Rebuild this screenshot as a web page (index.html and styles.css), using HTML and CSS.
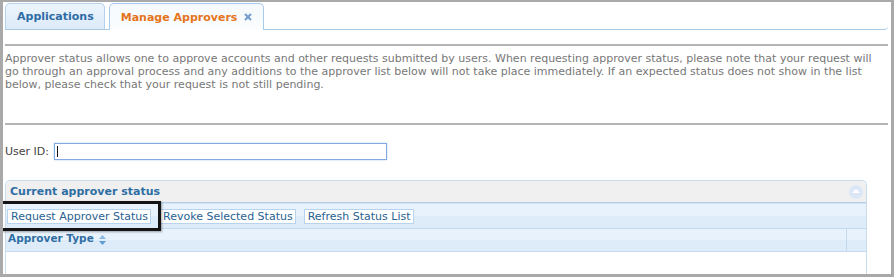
FILE: index.html
```html
<!DOCTYPE html>
<html lang="en">
<head>
  <meta charset="UTF-8" />
  <title>Manage Approvers</title>
  <link rel="stylesheet" href="styles.css">
</head>
<body>

  <div class="frame">
    <div class="tabs">
      <a class="tab">Applications</a>
      <a class="tab active">Manage Approvers
        <svg class="tab-close" width="8" height="8" viewBox="0 0 8 8"><path d="M1 1L7 7M7 1L1 7" stroke="#6e9dca" stroke-width="2"/></svg>
      </a>
    </div>

    <div class="tab-body">
      <hr class="rule">
      <p class="intro">Approver status allows one to approve accounts and other requests submitted by users. When requesting approver status, please note that your request will go through an approval process and any additions to the approver list below will not take place immediately. If an expected status does not show in the list below, please check that your request is not still pending.</p>
      <hr class="rule">

      <div class="user-row">
        <label for="userId">User ID:</label>
        <span class="input-wrap"><input type="text" id="userId" /></span>
      </div>

      <div class="panel">
        <div class="panel-head">
          <span>Current approver status</span>
          <span class="collapse"></span>
        </div>
        <div class="toolbar">
          <button>Request Approver Status</button>
          <button>Revoke Selected Status</button>
          <button>Refresh Status List</button>
        </div>
        <div class="grid-head">
          <div class="col">Approver Type
            <svg class="sort" width="7" height="10" viewBox="0 0 7 10"><path d="M3.5 0L7 4H0z" fill="#8cb8e2"/><path d="M0 6H7L3.5 10z" fill="#5f9bd4"/></svg>
          </div>
          <div class="col-end"></div>
        </div>
        <div class="grid-body"></div>
      </div>
    </div>

    <div class="callout"></div>
  </div>

</body>
</html>
```

FILE: styles.css
```css
* {
  margin: 0;
  padding: 0;
  box-sizing: border-box;
  font-family: 'DejaVu Sans', Verdana, sans-serif;
}

body {
  background-color: white;
  color: #333;
}

.frame {
  position: relative;
  width: 894px;
  height: 277px;
  border: 3px solid #a9a9a9;
  border-top-width: 2px;
  padding: 1px 3px 0 2px;
  overflow: hidden;
}

/* tabs */
.tabs {
  display: flex;
  gap: 4px;
  border-bottom: 1px solid #a9cae6;
  border-bottom-right-radius: 4px;
}

.tab {
  display: flex;
  align-items: center;
  height: 26px;
  padding: 0 10px 0 11px;
  border: 1px solid #b4d2ee;
  border-bottom: none;
  border-radius: 5px 5px 0 0;
  background: linear-gradient(#ecf5fd, #dceaf8);
  color: #2f6ca5;
  font-size: 11px;
  font-weight: bold;
  margin-bottom: -1px;
}

.tab.active {
  width: 155px;
  background: linear-gradient(#f5f9fd, #fbfdfe);
  border-color: #a7cbec;
  color: #e4751c;
  height: 27px;
}

.tab-close {
  margin-left: auto;
  margin-right: 1px;
}

/* body of the tab */
.rule {
  border: none;
  border-top: 2px solid #b5b5b5;
  margin-top: 14px;
}

.intro {
  font-size: 11px;
  line-height: 13px;
  color: #777;
  margin: 6px 0 32px;
  height: 39px;
}

.rule + .intro + .rule {
  margin-top: 0;
}

.user-row {
  display: flex;
  align-items: center;
  gap: 5px;
  margin-top: 18px;
  font-size: 11px;
  color: #444;
}

.input-wrap {
  position: relative;
}

.input-wrap::after {
  content: "";
  position: absolute;
  left: 3px;
  top: 3px;
  width: 1px;
  height: 11px;
  background: #111;
}

.user-row input {
  display: block;
  width: 333px;
  height: 17px;
  border: 1px solid #82aade;
  box-shadow: 0 0 2px #b8d2f2;
  font-size: 11px;
}

/* approver panel */
.panel {
  width: 862px;
  margin-top: 20px;
  border: 1px solid #c8dcee;
  border-bottom: none;
  border-radius: 5px 5px 0 0;
}

.panel-head {
  display: flex;
  align-items: center;
  justify-content: space-between;
  height: 22px;
  padding: 0 3px 0 4px;
  background-color: #f0f0f0;
  border-bottom: 1px solid #b3cfe8;
  border-radius: 5px 5px 0 0;
  color: #2f6ea3;
  font-size: 11px;
  font-weight: bold;
}

.collapse {
  position: relative;
  width: 14px;
  height: 14px;
  border-radius: 50%;
  background-color: #dbe7f6;
}

.collapse::after {
  content: "";
  position: absolute;
  left: 3px;
  top: 4px;
  border-left: 4px solid transparent;
  border-right: 4px solid transparent;
  border-bottom: 4px solid white;
}

.toolbar {
  display: flex;
  align-items: center;
  gap: 8px;
  height: 26px;
  padding-left: 1px;
  border-top: 1px solid #d2e3f3;
  border-bottom: 1px solid #c4d9ed;
  background: linear-gradient(#e8f2fc 50%, #deebf9 50%);
}

.toolbar button {
  height: 15px;
  padding: 0 2px 0 3px;
  border: 1px solid #b8d3ee;
  background-color: white;
  color: #2a5f92;
  font-size: 11px;
  line-height: 13px;
  cursor: pointer;
}

.grid-head {
  display: flex;
  height: 23px;
  border-bottom: 1px solid #c4d9ed;
  background: linear-gradient(#e8f2fc 50%, #deebf9 50%);
}

.col {
  flex: 1;
  display: flex;
  align-items: center;
  gap: 5px;
  padding-left: 2px;
  padding-bottom: 4px;
  border-right: 1px solid #c4d9ed;
  color: #2f6ea3;
  font-size: 10.5px;
  font-weight: bold;
}

.sort {
  margin-top: 3px;
}

.col-end {
  width: 19px;
}

.grid-body {
  height: 30px;
  background-color: white;
}

/* highlight drawn over the first button */
.callout {
  position: absolute;
  left: -3px;
  top: 199px;
  width: 161px;
  height: 30px;
  border: 3px solid #141414;
  box-shadow: 1px 1px 2px rgba(0, 0, 0, 0.35);
}
```
